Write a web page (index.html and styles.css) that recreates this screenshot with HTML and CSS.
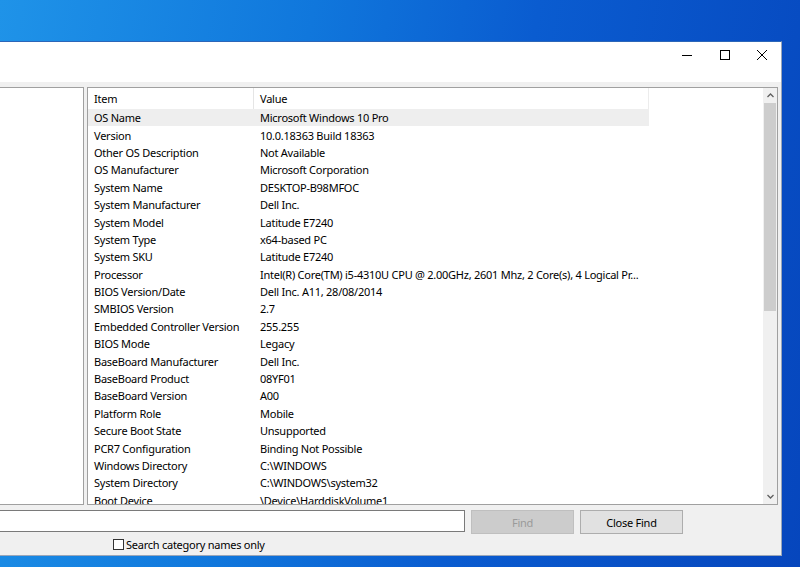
FILE: index.html
```html
<!DOCTYPE html>
<html>
<head>
<meta charset="utf-8">
<link rel="stylesheet" href="styles.css">
</head>
<body>
<div class="desktop">
  <div class="window">
    <div class="titlebar">
      <div class="ctl"><svg width="10" height="10" viewBox="0 0 10 10"><path d="M0 5.5H10" stroke="#000" stroke-width="1"/></svg></div>
      <div class="ctl"><svg width="10" height="10" viewBox="0 0 10 10"><rect x="0.5" y="0.5" width="9" height="9" fill="none" stroke="#000" stroke-width="1"/></svg></div>
      <div class="ctl"><svg width="10" height="10" viewBox="0 0 10 10"><path d="M0 0L10 10M10 0L0 10" stroke="#000" stroke-width="1"/></svg></div>
    </div>
    <div class="content">
      <div class="panes">
        <div class="tree"></div>
        <div class="list">
          <div class="rows">
            <div class="head"><div class="hc c1">Item</div><div class="hc c2">Value</div></div>
            <div class="row sel"><div class="c1">OS Name</div><div class="c2">Microsoft Windows 10 Pro</div></div>
            <div class="row"><div class="c1">Version</div><div class="c2">10.0.18363 Build 18363</div></div>
            <div class="row"><div class="c1">Other OS Description</div><div class="c2">Not Available</div></div>
            <div class="row"><div class="c1">OS Manufacturer</div><div class="c2">Microsoft Corporation</div></div>
            <div class="row"><div class="c1">System Name</div><div class="c2">DESKTOP-B98MFOC</div></div>
            <div class="row"><div class="c1">System Manufacturer</div><div class="c2">Dell Inc.</div></div>
            <div class="row"><div class="c1">System Model</div><div class="c2">Latitude E7240</div></div>
            <div class="row"><div class="c1">System Type</div><div class="c2">x64-based PC</div></div>
            <div class="row"><div class="c1">System SKU</div><div class="c2">Latitude E7240</div></div>
            <div class="row"><div class="c1">Processor</div><div class="c2">Intel(R) Core(TM) i5-4310U CPU @ 2.00GHz, 2601 Mhz, 2 Core(s), 4 Logical Pr...</div></div>
            <div class="row"><div class="c1">BIOS Version/Date</div><div class="c2">Dell Inc. A11, 28/08/2014</div></div>
            <div class="row"><div class="c1">SMBIOS Version</div><div class="c2">2.7</div></div>
            <div class="row"><div class="c1">Embedded Controller Version</div><div class="c2">255.255</div></div>
            <div class="row"><div class="c1">BIOS Mode</div><div class="c2">Legacy</div></div>
            <div class="row"><div class="c1">BaseBoard Manufacturer</div><div class="c2">Dell Inc.</div></div>
            <div class="row"><div class="c1">BaseBoard Product</div><div class="c2">08YF01</div></div>
            <div class="row"><div class="c1">BaseBoard Version</div><div class="c2">A00</div></div>
            <div class="row"><div class="c1">Platform Role</div><div class="c2">Mobile</div></div>
            <div class="row"><div class="c1">Secure Boot State</div><div class="c2">Unsupported</div></div>
            <div class="row"><div class="c1">PCR7 Configuration</div><div class="c2">Binding Not Possible</div></div>
            <div class="row"><div class="c1">Windows Directory</div><div class="c2">C:\WINDOWS</div></div>
            <div class="row"><div class="c1">System Directory</div><div class="c2">C:\WINDOWS\system32</div></div>
            <div class="row"><div class="c1">Boot Device</div><div class="c2">\Device\HarddiskVolume1</div></div>
          </div>
          <div class="vscroll">
            <div class="arrow"><svg width="7" height="5" viewBox="0 0 7 5"><path d="M0.5 4L3.5 1L6.5 4" fill="none" stroke="#606060" stroke-width="1.3"/></svg></div>
            <div class="track"><div class="thumb"></div></div>
            <div class="arrow"><svg width="7" height="5" viewBox="0 0 7 5"><path d="M0.5 1L3.5 4L6.5 1" fill="none" stroke="#606060" stroke-width="1.3"/></svg></div>
          </div>
        </div>
      </div>
      <div class="findrow">
        <div class="textbox"></div>
        <div class="btn disabled">Find</div>
        <div class="btn">Close Find</div>
      </div>
      <div class="checkrow">
        <span class="box"></span><span class="label">Search category names only</span>
      </div>
    </div>
  </div>
</div>
</body>
</html>
```

FILE: styles.css
```css
html, body {
  margin: 0;
  padding: 0;
}
body {
  font-family: "Noto Sans", "Open Sans", sans-serif;
  font-size: 11px;
  letter-spacing: -0.25px;
  color: #000;
}
.desktop {
  width: 800px;
  height: 567px;
  box-sizing: border-box;
  padding-top: 41px;
  overflow: hidden;
  background: linear-gradient(100deg, #1f93e8 0%, #1077dc 35%, #0a5cd0 60%, #0646bd 100%);
}
.window {
  width: 782px;
  height: 515px;
  box-sizing: border-box;
  border-top: 1px solid #2c66b8;
  border-right: 1px solid #9aa6b8;
  border-bottom: 1px solid #9aa6b8;
  background: #f0f0f0;
  display: flex;
  flex-direction: column;
}
.titlebar {
  height: 40px;
  background: #fff;
  display: flex;
  justify-content: flex-end;
  flex: none;
}
.ctl {
  width: 37.5px;
  height: 26px;
  display: flex;
  align-items: center;
  justify-content: center;
}
.content {
  flex: 1;
  padding-top: 5px;
  display: flex;
  flex-direction: column;
}
.panes {
  display: flex;
  gap: 3px;
  height: 418px;
  flex: none;
}
.tree {
  width: 84px;
  box-sizing: border-box;
  background: #fff;
  border: 1px solid #a0a0a0;
  border-left: none;
}
.list {
  width: 691px;
  box-sizing: border-box;
  background: #fff;
  border: 1px solid #a0a0a0;
  display: flex;
  overflow: hidden;
}
.rows {
  flex: 1;
  overflow: hidden;
}
.head, .row {
  display: flex;
  width: 561px;
}
.head {
  height: 21px;
  align-items: center;
  border-right: 1px solid #ececec;
  box-sizing: border-box;
}
.hc.c1 {
  border-right: 1px solid #e5e5e5;
  height: 21px;
  display: flex;
  align-items: center;
}
.row {
  height: 17.4px;
  align-items: center;
  white-space: nowrap;
}
.row.sel {
  background: #eeeeee;
}
.c1 {
  width: 166px;
  box-sizing: border-box;
  padding-left: 6px;
  flex: none;
}
.c2 {
  padding-left: 6px;
  flex: 1;
}
.vscroll {
  width: 14px;
  flex: none;
  background: #f0f0f0;
  display: flex;
  flex-direction: column;
}
.arrow {
  height: 15px;
  display: flex;
  align-items: center;
  justify-content: center;
  flex: none;
}
.track {
  flex: 1;
}
.thumb {
  height: 208px;
  margin: 0 1px;
  background: #cdcdcd;
}
.findrow {
  display: flex;
  align-items: center;
  margin-top: 5px;
  height: 24px;
}
.textbox {
  width: 465px;
  height: 22px;
  box-sizing: border-box;
  background: #fff;
  border: 1px solid #7a7a7a;
  border-left: none;
  margin-right: 6px;
  align-self: flex-start;
}
.btn {
  width: 103px;
  height: 24px;
  box-sizing: border-box;
  border: 1px solid #adadad;
  background: #e1e1e1;
  display: flex;
  align-items: center;
  justify-content: center;
  margin-right: 6px;
}
.btn.disabled {
  background: #cccccc;
  border-color: #bfbfbf;
  color: #9a9a9a;
}
.checkrow {
  display: flex;
  align-items: center;
  margin-left: 113px;
  margin-top: 3px;
  height: 14px;
}
.box {
  width: 11px;
  height: 11px;
  box-sizing: border-box;
  border: 1px solid #333;
  background: #fff;
  margin-right: 2px;
}
```
